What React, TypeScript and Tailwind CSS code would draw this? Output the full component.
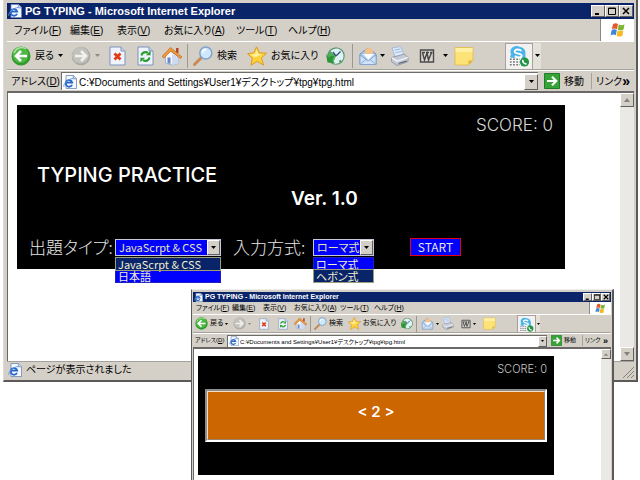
import React from "react";

type Size = "lg" | "sm";

const uiFont =
  "font-['Liberation_Sans','Noto_Sans_CJK_JP',sans-serif] [font-feature-settings:'palt']";
const gothic = "font-['Noto_Sans_CJK_JP',sans-serif] [font-feature-settings:'palt']";
const display = "font-['Inter','Noto_Sans_CJK_JP',sans-serif]";

/* ---------- icons ---------- */

function BackIcon({ className = "" }: { className?: string }) {
  return (
    <svg viewBox="0 0 20 20" className={className} aria-hidden="true">
      <circle cx="10" cy="10" r="9.5" fill="#2f9a2a" />
      <circle cx="9.5" cy="9" r="8" fill="#4fb845" />
      <path d="M3 7a8 8 0 0 1 12-4" fill="none" stroke="#a6e39a" strokeWidth="1.5" />
      <path d="M16 10H5.5M10 5l-5 5 5 5" fill="none" stroke="#fff" strokeWidth="2.6" />
    </svg>
  );
}

function ForwardIcon({ className = "" }: { className?: string }) {
  return (
    <svg viewBox="0 0 20 20" className={className} aria-hidden="true">
      <circle cx="10" cy="10" r="9.3" fill="#aaa8a3" />
      <circle cx="9.5" cy="9.3" r="8.3" fill="#c3c1bc" />
      <path d="M4 10h10.5M10 5l5 5-5 5" fill="none" stroke="#f2f1ee" strokeWidth="2.6" />
    </svg>
  );
}

function StopIcon({ className = "" }: { className?: string }) {
  return (
    <svg viewBox="0 0 17 20" className={className} aria-hidden="true">
      <path d="M1 1h11l4 4v14H1z" fill="#eef3fd" stroke="#7f93bb" />
      <path d="M12 1v4h4" fill="#c9d8f3" stroke="#7f93bb" />
      <path d="M5.5 7.5l6 6M11.500 7.500l-6 6" stroke="#e23a14" strokeWidth="2.8" />
    </svg>
  );
}

function RefreshIcon({ className = "" }: { className?: string }) {
  return (
    <svg viewBox="0 0 17 20" className={className} aria-hidden="true">
      <path d="M1 1h11l4 4v14H1z" fill="#eef3fd" stroke="#7f93bb" />
      <path d="M12 1v4h4" fill="#c9d8f3" stroke="#7f93bb" />
      <path d="M4.500 9.500a4 4 0 0 1 6.500-2.500" fill="none" stroke="#2a9d2f" strokeWidth="2.2" />
      <path d="M9 9.200h4.600V4.700z" fill="#2a9d2f" />
      <path d="M12.500 11.500a4 4 0 0 1-6.500 2.500" fill="none" stroke="#2a9d2f" strokeWidth="2.2" />
      <path d="M8 11.800H3.400v4.500z" fill="#2a9d2f" />
    </svg>
  );
}

function HomeIcon({ className = "" }: { className?: string }) {
  return (
    <svg viewBox="0 0 20 20" className={className} aria-hidden="true">
      <path d="M14 2h2.500v5H14z" fill="#b5482a" />
      <path d="M3.500 9.500L8 5l8.500 6v6.500L10 19l-6.500-2z" fill="#f4f6fb" stroke="#8ea3c8" strokeWidth=".8" />
      <path d="M10 8l6.500 3.500v6L10 19z" fill="#cddaf0" />
      <path d="M5.500 11.500h3V18l-3-1z" fill="#6b88c0" />
      <path d="M0 10.500L8.500 1.500 20 11l-1.500 1.500L9 5 2 12z" fill="#ef9a3c" stroke="#c16a1c" strokeWidth=".7" />
    </svg>
  );
}

function SearchIcon({ className = "" }: { className?: string }) {
  return (
    <svg viewBox="0 0 20 20" className={className} aria-hidden="true">
      <path d="M8.500 11.500L1.500 18.500" stroke="#c98a5a" strokeWidth="3" strokeLinecap="round" />
      <circle cx="12.800" cy="7" r="6" fill="#cfe8fb" stroke="#7fa3cc" strokeWidth="1.500" />
      <path d="M9.500 6.500a3.500 3.500 0 0 1 3.500-3" fill="none" stroke="#fff" strokeWidth="1.800" />
    </svg>
  );
}

function StarIcon({ className = "" }: { className?: string }) {
  return (
    <svg viewBox="0 0 20 20" className={className} aria-hidden="true">
      <path
        d="M9.500.8l2.900 6 7 .4-5 4.900 2.200 7-6.400-3.800L4 19.200l1.300-7L.6 7.700l6.300-.9z"
        fill="#ffd23c"
        stroke="#dc9a1e"
      />
      <path d="M9.500 3.500l1.700 4.500 4.300.3-7.500 3-5-2.800 5-.5z" fill="#fff0a0" />
    </svg>
  );
}

function HistoryIcon({ className = "" }: { className?: string }) {
  return (
    <svg viewBox="0 0 20 20" className={className} aria-hidden="true">
      <circle cx="11" cy="10" r="8" fill="#4db04e" stroke="#5b9a72" strokeWidth="1.500" />
      <path d="M11 10L5.500 5A7.500 7.500 0 1 1 8 17z" fill="#e2f0fa" />
      <path d="M1 8l1.500 8.500L10 17l-3-2.500L9 10H5.500L4 12z" fill="#2c9438" />
      <path d="M11 10l4.500-4.500M11 10l-3-4" stroke="#39567e" strokeWidth="1.400" />
      <path d="M14.500 14.500l1.500 1.500" stroke="#36a443" strokeWidth="2" />
    </svg>
  );
}

function MailIcon({ className = "" }: { className?: string }) {
  return (
    <svg viewBox="0 0 20 20" className={className} aria-hidden="true">
      <path d="M2 8l8-6 8 6v10.500H2z" fill="#a9c9ec" stroke="#6f93c3" />
      <circle cx="11" cy="6" r="4" fill="#f5c189" />
      <path d="M5 8h11l-5.500 6z" fill="#f8fbff" />
      <path d="M2 9l8 6 8-6v9.500H2z" fill="#cfe2f7" stroke="#7f9fcb" strokeWidth=".8" />
      <path d="M2.500 18l6-5M17.500 18l-6-5" stroke="#7f9fcb" strokeWidth=".8" />
    </svg>
  );
}

function PrintIcon({ className = "" }: { className?: string }) {
  return (
    <svg viewBox="0 0 20 20" className={className} aria-hidden="true">
      <path d="M3 2l9-1.500 3 9-8.500 2z" fill="#dceafb" stroke="#9db3d3" strokeWidth=".8" />
      <path d="M5.500 4l6-1M6.500 6.500l6-1" stroke="#9cb7dd" />
      <path d="M2.500 11.500l13-3.500 3.500 3.500v4L8 19.500l-5.500-4z" fill="#c5cad4" stroke="#858d9c" strokeWidth=".8" />
      <path d="M2.500 11.500L8 15l11-3.500" fill="none" stroke="#f6f7fa" strokeWidth="1.200" />
      <path d="M9.500 17.500l8-2.400" stroke="#5d6779" strokeWidth="1.200" />
    </svg>
  );
}

function WordIcon({ className = "" }: { className?: string }) {
  return (
    <svg viewBox="0 0 16 16" className={className} aria-hidden="true">
      <path d="M1.500 2h13v12h-13z" fill="#d9d6cf" stroke="#4a4a4a" strokeWidth="1.400" />
      <path d="M3.500 4.800L5.500 12 8 5l1.500 7 3-7.200M3 4.500h3M7 4.500h3M11 4.500h2.500" fill="none" stroke="#444" strokeWidth="1.400" />
    </svg>
  );
}

function NoteIcon({ className = "" }: { className?: string }) {
  return (
    <svg viewBox="0 0 20 20" className={className} aria-hidden="true">
      <path d="M1 1.500h18v13l-4.500 4.500H1z" fill="#fde377" stroke="#dfb947" strokeWidth=".8" />
      <path d="M1.500 2h17v4h-17z" fill="#fff0a4" />
      <path d="M14.500 19v-4.500H19z" fill="#e0b43c" />
    </svg>
  );
}

function PhoneIcon({ className = "" }: { className?: string }) {
  return (
    <svg viewBox="0 0 24 24" className={className} aria-hidden="true">
      <path
        d="M7 1.500c3-1 5 .3 6.500.8 4 .7 6 4 5.500 7.700v7H5.500C2 15 2 12 3.500 10 1.500 7 3 2.500 7 1.500z"
        fill="#4cb4e8"
      />
      <path d="M14.500 6.500c-2-2.500-7.500-2-7.200.7.300 3 7.700 1.500 7.700 4.500 0 2.300-5 2.500-7.500.3" fill="none" stroke="#fff" strokeWidth="2" />
      <path d="M1 14h14v9H1z" fill="#f7f7f7" />
      <path d="M2 15.500h11M2 18.500h11M2 21.500h11" stroke="#777" strokeWidth="1.500" strokeDasharray="2 1.500" />
      <circle cx="18" cy="18.500" r="5" fill="#229443" />
      <path d="M16.300 16c-.8 2.500 1.500 5 4 4.500" fill="none" stroke="#fff" strokeWidth="1.700" />
    </svg>
  );
}

function PageIcon({ className = "" }: { className?: string }) {
  return (
    <svg viewBox="0 0 14 14" className={className} aria-hidden="true">
      <path d="M3 .5h7.500L13.500 3.500v10H3z" fill="#f4f8ff" stroke="#6f87b6" strokeWidth=".8" />
      <path d="M10.300.5v3.300h3.200" fill="#d2dff5" stroke="#6f87b6" strokeWidth=".8" />
      <path d="M9 9.800A3.300 3.300 0 1 1 9.200 7.600H3" fill="none" stroke="#2a68c8" strokeWidth="1.800" />
      <path d="M.8 11.800C0 9 5 4 10 3.500" fill="none" stroke="#5a94e4" strokeWidth=".9" />
    </svg>
  );
}

function GoIcon({ className = "" }: { className?: string }) {
  return (
    <svg viewBox="0 0 16 16" className={className} aria-hidden="true">
      <path d="M.5.5h15v15H.5z" fill="#36a336" stroke="#1f7d27" />
      <path d="M3 8h8.500M8 3.800L12.200 8 8 12.200" fill="none" stroke="#fff" strokeWidth="2.200" />
    </svg>
  );
}

function FlagIcon({ className = "" }: { className?: string }) {
  return (
    <svg viewBox="0 0 16 16" className={className} aria-hidden="true">
      <path d="M3 2.200C4.800.8 6.500 1 8 2L7 7.200c-1.700-1-3.400-1-5.200 0z" fill="#e5592a" />
      <path d="M8.800 2.500c2 1 3.700 1 5.700-.2l-1 5.200c-2 1.200-3.800 1.200-5.700.2z" fill="#7cb52f" />
      <path d="M1.600 8.200c1.800-1.200 3.500-1.200 5.200-.2l-1 5.200c-1.700-1-3.500-1-5.200.2z" fill="#3c86dc" />
      <path d="M7.600 8.500c2 1 3.700 1 5.700 0l-1 5.200c-2 1.200-3.800 1.200-5.700 0z" fill="#f6b91e" />
    </svg>
  );
}

function Caret({ size, muted = false }: { size: Size; muted?: boolean }) {
  return (
    <svg
      viewBox="0 0 5 3"
      className={size === "lg" ? "h-[3px] w-[5px] shrink-0" : "h-[2px] w-[3px] shrink-0"}
      aria-hidden="true"
    >
      <path d="M0 0h5L2.500 3z" fill={muted ? "#8b8881" : "#000"} />
    </svg>
  );
}

/* ---------- browser chrome ---------- */

const bevel =
  "border border-t-white border-l-white border-r-[#606060] border-b-[#606060] bg-[#d4d0c8]";

const menus = [
  { name: "ファイル", key: "F", lg: "w-[56px]", sm: "w-[36px]" },
  { name: "編集", key: "E", lg: "w-[47px]", sm: "w-[31px]" },
  { name: "表示", key: "V", lg: "w-[47px]", sm: "w-[31px]" },
  { name: "お気に入り", key: "A", lg: "w-[72px]", sm: "w-[46px]" },
  { name: "ツール", key: "T", lg: "w-[52px]", sm: "w-[34px]" },
  { name: "ヘルプ", key: "H", lg: "w-[52px]", sm: "w-[34px]" },
];

type Tool = {
  name: string;
  icon?: (p: { className?: string }) => React.ReactElement;
  label?: string;
  caret?: boolean;
  muted?: boolean;
  lg: string;
  sm: string;
  iconLg?: string;
  iconSm?: string;
};

const tools: Tool[] = [
  { name: "戻る", icon: BackIcon, label: "戻る", caret: true, lg: "w-[60px] gap-1", sm: "w-[38px]" },
  { name: "進む", icon: ForwardIcon, caret: true, muted: true, lg: "w-[38px] gap-1", sm: "w-[26px]" },
  { name: "中止", icon: StopIcon, lg: "w-[28px]", sm: "w-[19px]", iconLg: "h-5 w-[17px]", iconSm: "h-3 w-[10px]" },
  { name: "更新", icon: RefreshIcon, lg: "w-[25px]", sm: "w-[16px]", iconLg: "h-5 w-[17px]", iconSm: "h-3 w-[10px]" },
  { name: "ホーム", icon: HomeIcon, lg: "w-[25px]", sm: "w-[16px]" },
  { name: "", lg: "w-[6px]", sm: "w-[4px]" },
  { name: "検索", icon: SearchIcon, label: "検索", lg: "w-[54px] gap-1", sm: "w-[34px]" },
  { name: "お気に入り", icon: StarIcon, label: "お気に入り", lg: "w-[78px] gap-1", sm: "w-[52px]" },
  { name: "履歴", icon: HistoryIcon, lg: "w-[27px]", sm: "w-[16px]" },
  { name: "", lg: "w-[6px]", sm: "w-[5px]" },
  { name: "メール", icon: MailIcon, caret: true, lg: "w-[31px] gap-[2px]", sm: "w-[20px]" },
  { name: "印刷", icon: PrintIcon, lg: "w-[30px]", sm: "w-[20px]" },
  { name: "編集", icon: WordIcon, caret: true, lg: "w-[35px] gap-2", sm: "w-[22px]", iconLg: "size-4", iconSm: "size-[10px]" },
  { name: "メモ", icon: NoteIcon, lg: "w-[51px]", sm: "w-[34px]" },
];

function Browser({
  size,
  className,
  children,
}: {
  size: Size;
  className: string;
  children: React.ReactNode;
}) {
  const lg = size === "lg";
  const groove = "border-t border-t-white border-b border-b-[#a5a29b]";
  return (
    <section
      className={`absolute flex flex-col bg-[#d4d0c8] border-[#5c5a57] ${uiFont} ${
        lg
          ? "border-r-2 border-b-2 border-l border-l-[#dedbd5] pt-[3px] pr-[2px] pb-[2px] pl-[3px] text-[10px]"
          : "border-l border-r-2 pt-[2px] pr-px pl-px text-[7px]"
      } ${className}`}
    >
      <header
        className={`flex shrink-0 items-center bg-[#0a246a] text-white ${lg ? "h-4 gap-[3px] px-px" : "h-[10px] gap-[2px] px-px"}`}
      >
        <PageIcon className={lg ? "size-[14px]" : "size-[9px]"} />
        <h1
          className={`grow whitespace-nowrap font-bold ${lg ? "text-[11px] leading-4" : "text-[7px] leading-[10px]"}`}
        >
          PG TYPING - Microsoft Internet Explorer
        </h1>
        <div className="flex">
          {["最小化", "最大化", "閉じる"].map((label, i) => (
            <button
              key={label}
              aria-label={label}
              className={`flex items-center justify-center ${bevel} ${lg ? "h-3 w-[14px]" : "h-[8px] w-[9px]"}`}
            >
              <svg viewBox="0 0 8 8" className={lg ? "size-2" : "size-[6px]"} aria-hidden="true">
                {i === 0 && <path d="M1 7h4" stroke="#000" strokeWidth="2" />}
                {i === 1 && <path d="M.5 1h7v6.500h-7zM0 1.500h8" fill="none" stroke="#000" />}
                {i === 2 && <path d="M1 1l6 6M7 1L1 7" stroke="#000" strokeWidth="1.500" />}
              </svg>
            </button>
          ))}
        </div>
      </header>

      <nav className={`flex shrink-0 items-stretch ${lg ? "h-[22px] pl-[7px]" : "h-[12px] pl-[3px]"}`}>
        {menus.map((m) => (
          <button key={m.name} className={`shrink-0 whitespace-nowrap text-left ${lg ? m.lg : m.sm}`}>
            {m.name}(<span className="underline">{m.key}</span>)
          </button>
        ))}
        <span
          className={`ml-auto flex items-center justify-center border-l border-[#8b8881] bg-white ${lg ? "w-[34px]" : "w-[22px]"}`}
        >
          <FlagIcon className={lg ? "size-4" : "size-[11px]"} />
        </span>
      </nav>

      <div
        className={`flex shrink-0 items-center ${groove} ${lg ? "h-[29px] pl-[4px]" : "h-[19px] pl-[2px]"}`}
      >
        {tools.map((t, i) =>
          t.icon ? (
            <button
              key={i}
              aria-label={t.name}
              className={`flex shrink-0 items-center whitespace-nowrap ${lg ? t.lg : `${t.sm} gap-[2px]`}`}
            >
              <t.icon
                className={`shrink-0 ${lg ? t.iconLg ?? "size-5" : t.iconSm ?? "size-[13px]"}`}
              />
              {t.label && <span>{t.label}</span>}
              {t.caret && <Caret size={size} muted={t.muted} />}
            </button>
          ) : (
            <span key={i} className={`shrink-0 ${lg ? `h-6 ${t.lg}` : `h-4 ${t.sm}`}`}>
              <span className="block h-full w-px bg-[#9b9892]" />
            </span>
          ),
        )}
        <button
          aria-label="通話"
          className={`flex items-center border-t border-l border-[#a89da0] bg-[#f2f1ef] ${lg ? "h-[26px] w-[27px]" : "h-[17px] w-[18px]"}`}
        >
          <PhoneIcon className={lg ? "ml-[2px] size-[22px]" : "ml-px size-[15px]"} />
        </button>
        <button
          aria-label="通話メニュー"
          className={`flex items-center justify-center border-l border-[#a5a29b] bg-[#e4e1db] ${lg ? "h-[26px] w-[9px]" : "h-[17px] w-[5px]"}`}
        >
          <Caret size={size} />
        </button>
      </div>

      <form
        onSubmit={(e) => e.preventDefault()}
        className={`flex shrink-0 items-center border-t border-white ${lg ? "h-[21px] pl-[4px]" : "h-[14px] pl-[2px] text-[6px]"}`}
      >
        <label
          htmlFor={`address-${size}`}
          className={`shrink-0 whitespace-nowrap ${lg ? "w-[50px]" : "w-[32px]"}`}
        >
          アドレス(<span className="underline">D</span>)
        </label>
        <div
          className={`flex min-w-0 grow items-center border-t border-l border-[#6f6d69] bg-white ${lg ? "h-[18px] gap-[2px] pl-px" : "h-[12px] gap-px pl-px"}`}
        >
          <PageIcon className={`shrink-0 ${lg ? "size-[14px]" : "size-[10px]"}`} />
          <input
            id={`address-${size}`}
            defaultValue="C:¥Documents and Settings¥User1¥デスクトップ¥tpg¥tpg.html"
            className={`min-w-0 grow bg-transparent outline-none ${lg ? "h-4" : "h-[11px]"}`}
          />
          <button
            aria-label="履歴を表示"
            type="button"
            className={`flex shrink-0 items-center justify-center ${bevel} ${lg ? "h-4 w-[14px]" : "h-[11px] w-[9px]"}`}
          >
            <Caret size={size} />
          </button>
        </div>
        <button
          className={`flex shrink-0 items-center whitespace-nowrap ${lg ? "ml-[6px] w-[47px] gap-1" : "ml-[4px] w-[31px] gap-[2px]"}`}
        >
          <GoIcon className={`shrink-0 ${lg ? "size-4" : "size-[11px]"}`} />
          移動
        </button>
        <button
          type="button"
          className={`flex shrink-0 items-center justify-between whitespace-nowrap border-l border-[#a5a29b] ${lg ? "h-4 w-[43px] pr-1 pl-1" : "h-[11px] w-[29px] pr-[3px] pl-[2px]"}`}
        >
          リンク<b className={lg ? "text-[14px] leading-4" : "text-[9px] leading-[10px]"}>»</b>
        </button>
      </form>

      <div className="flex grow border-t-2 border-l border-[#6b6967] bg-white">
        <main className="min-w-0 grow">{children}</main>
        <div
          className={`flex shrink-0 flex-col justify-between bg-[#ebe9e5] ${lg ? "w-[14px]" : "w-[10px]"}`}
        >
          {["上", "下"].map((dir, i) => (
            <button
              key={dir}
              aria-label={`${dir}へスクロール`}
              className={`flex items-center justify-center ${bevel} ${lg ? "h-[14px]" : "h-[10px]"}`}
            >
              <svg viewBox="0 0 6 4" className={lg ? "h-1 w-[6px]" : "h-[3px] w-[4px]"} aria-hidden="true">
                <path d={i === 0 ? "M0 4h6L3 0z" : "M0 0h6L3 4z"} fill="#85827c" />
              </svg>
            </button>
          ))}
        </div>
      </div>

      {lg && (
        <footer className="flex h-[17px] shrink-0 items-center gap-1 border-t border-[#a5a29b] pl-px">
          <PageIcon className="size-[14px]" />
          <span className="grow whitespace-nowrap leading-4">ページが表示されました</span>
          <svg viewBox="0 0 12 12" className="mt-1 size-3" aria-hidden="true">
            <path d="M1 12L12 1M5 12l7-7M9 12l3-3" stroke="#85827c" />
          </svg>
        </footer>
      )}
    </section>
  );
}

/* ---------- typing game ---------- */

function Picker({
  id,
  label,
  options,
  active,
  labelClass,
  width,
}: {
  id: string;
  label: string;
  options: string[];
  active: number;
  labelClass: string;
  width: string;
}) {
  return (
    <div className="flex shrink-0 items-center">
      <label
        htmlFor={id}
        className={`shrink-0 whitespace-nowrap text-[17px] leading-[18px] font-light text-[#e8e8e8] ${labelClass}`}
      >
        {label}
      </label>
      <div className={`relative shrink-0 ${width}`}>
        <div className="flex h-[17px] items-center border border-[#c9c8d8] bg-[#0000fe]">
          <select
            id={id}
            className="h-[15px] min-w-0 grow appearance-none bg-transparent pl-[3px] text-[11px] leading-[15px] text-[#e6e6b4] outline-none"
          >
            {options.map((o) => (
              <option key={o}>{o}</option>
            ))}
          </select>
          <span className={`flex h-[15px] w-[13px] shrink-0 items-center justify-center ${bevel}`}>
            <Caret size="lg" />
          </span>
        </div>
        <ul className="absolute top-[18px] left-0 w-full border border-[#2020c0] text-[11px] leading-3 text-[#f0f0d0]">
          {options.map((o, i) => (
            <li
              key={o}
              className={`h-3 whitespace-nowrap pl-[2px] ${
                i === active ? "bg-[#0a246a] outline outline-[#9c9c78]" : "bg-[#0000fe]"
              }`}
            >
              {o}
            </li>
          ))}
        </ul>
      </div>
    </div>
  );
}

export default function App() {
  return (
    <div className="relative h-screen w-full overflow-hidden bg-white">
      <Browser size="lg" className="top-0 right-[2px] left-[3px]">
        <div className={`mt-3 mr-[55px] mb-[92px] ml-[9px] bg-black pb-[13px] text-white ${gothic}`}>
          <p className={`pt-2 pr-3 text-right text-[17px] leading-6 font-light text-[#d8d8d8] ${display}`}>
            SCORE: 0
          </p>
          <h2 className={`mt-6 pl-5 text-[20px] leading-7 font-medium ${display}`}>TYPING PRACTICE</h2>
          <p className={`pl-[274px] text-[19px] leading-5 font-semibold ${display}`}>Ver. 1.0</p>
          <div className="mt-[29px] flex items-center pl-3">
            <Picker
              id="kind"
              label="出題タイプ:"
              options={["JavaScrpt & CSS", "日本語"]}
              active={0}
              labelClass="w-[86px]"
              width="w-[106px]"
            />
            <div className="w-3 shrink-0" />
            <Picker
              id="mode"
              label="入力方式:"
              options={["ローマ式", "ヘボン式"]}
              active={1}
              labelClass="w-[80px]"
              width="w-[61px]"
            />
            <button className="ml-9 h-[18px] w-[51px] border border-[#e00020] bg-[#0000fe] text-[12px] leading-4 text-[#e6e6e6]">
              START
            </button>
          </div>
        </div>
      </Browser>

      <Browser size="sm" className="top-[289px] right-[26px] -bottom-3 left-[191px] border-t border-t-[#efeeea]">
        <div className={`mt-[7px] mr-[47px] ml-[4px] bg-black px-[7px] pb-[33px] text-white ${gothic}`}>
          <p className={`pt-[5px] text-right text-[11px] leading-4 font-light text-[#c8c8c8] ${display}`}>
            SCORE: 0
          </p>
          <div className="mt-3 border-2 border-t-[#8c8c8c] border-r-white border-b-white border-l-[#8c8c8c]">
            <p
              className={`border border-t-[#f3dcc2] border-r-[#9a8068] border-b-[#9a8068] border-l-[#f3dcc2] bg-[#cc6600] pt-[10px] pb-[17px] text-center text-[15px] leading-5 font-semibold ${display}`}
            >
              &lt; 2 &gt;
            </p>
          </div>
        </div>
      </Browser>
    </div>
  );
}
